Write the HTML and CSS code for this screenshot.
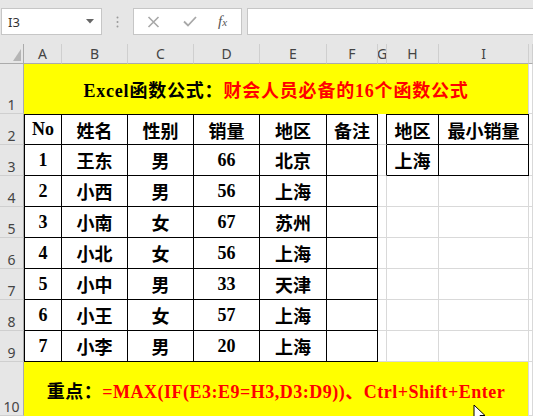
FILE: index.html
```html
<!DOCTYPE html>
<html lang="zh">
<head>
<meta charset="utf-8">
<title>Excel</title>
<link rel="stylesheet" href="styles.css">
</head>
<body>
<div class="fbar">
  <div class="namebox">
    <span class="nbtext">I3</span>
    <svg class="nbarrow" width="8" height="5" viewBox="0 0 8 5"><path d="M0 0 L8 0 L4 4.5 Z" fill="#666"/></svg>
  </div>
  <div class="dots">
    <svg width="3" height="12" viewBox="0 0 3 12"><circle cx="1.5" cy="1.5" r="1" fill="#9a9a9a"/><circle cx="1.5" cy="6" r="1" fill="#9a9a9a"/><circle cx="1.5" cy="10.5" r="1" fill="#9a9a9a"/></svg>
  </div>
  <div class="fbtns">
    <svg class="ico" width="13" height="12" viewBox="0 0 13 12"><path d="M1.5 1 L11.5 11 M11.5 1 L1.5 11" stroke="#a8a8a8" stroke-width="1.6" fill="none"/></svg>
    <svg class="ico" width="14" height="11" viewBox="0 0 14 11"><path d="M1 5.5 L5 9.5 L13 1" stroke="#a8a8a8" stroke-width="1.8" fill="none"/></svg>
    <span class="fx">f<span class="fxx">x</span></span>
  </div>
  <div class="finput"></div>
</div>

<div class="sheet">
  <!-- column header -->
  <div class="ch corner"><svg width="8" height="12" viewBox="0 0 8 12"><path d="M8 0 L8 12 L0 12 Z" fill="#b5b5b5"/></svg></div>
  <div class="ch">A</div><div class="ch">B</div><div class="ch">C</div><div class="ch">D</div><div class="ch">E</div><div class="ch">F</div><div class="ch">G</div><div class="ch">H</div><div class="ch">I</div><div class="ch"></div>

  <!-- row 1 -->
  <div class="rh">1</div>
  <div class="c y title"><span class="blk">Excel函数公式：</span><span class="red">财会人员必备的16个函数公式</span></div>
  <div class="c"></div>

  <!-- row 2 -->
  <div class="rh">2</div>
  <div class="c t tt tl">No</div><div class="c t tt">姓名</div><div class="c t tt">性别</div><div class="c t tt">销量</div><div class="c t tt">地区</div><div class="c t tt">备注</div>
  <div class="c gb"></div><div class="c t tt">地区</div><div class="c t tt">最小销量</div><div class="c"></div>

  <!-- row 3 -->
  <div class="rh">3</div>
  <div class="c t tl">1</div><div class="c t">王东</div><div class="c t">男</div><div class="c t">66</div><div class="c t">北京</div><div class="c t"></div>
  <div class="c gb"></div><div class="c t">上海</div><div class="c t"></div><div class="c"></div>

  <!-- row 4 -->
  <div class="rh">4</div>
  <div class="c t tl">2</div><div class="c t">小西</div><div class="c t">男</div><div class="c t">56</div><div class="c t">上海</div><div class="c t"></div>
  <div class="c"></div><div class="c"></div><div class="c"></div><div class="c"></div>

  <!-- row 5 -->
  <div class="rh">5</div>
  <div class="c t tl">3</div><div class="c t">小南</div><div class="c t">女</div><div class="c t">67</div><div class="c t">苏州</div><div class="c t"></div>
  <div class="c"></div><div class="c"></div><div class="c"></div><div class="c"></div>

  <!-- row 6 -->
  <div class="rh">6</div>
  <div class="c t tl">4</div><div class="c t">小北</div><div class="c t">女</div><div class="c t">56</div><div class="c t">上海</div><div class="c t"></div>
  <div class="c"></div><div class="c"></div><div class="c"></div><div class="c"></div>

  <!-- row 7 -->
  <div class="rh">7</div>
  <div class="c t tl">5</div><div class="c t">小中</div><div class="c t">男</div><div class="c t">33</div><div class="c t">天津</div><div class="c t"></div>
  <div class="c"></div><div class="c"></div><div class="c"></div><div class="c"></div>

  <!-- row 8 -->
  <div class="rh">8</div>
  <div class="c t tl">6</div><div class="c t">小王</div><div class="c t">女</div><div class="c t">57</div><div class="c t">上海</div><div class="c t"></div>
  <div class="c"></div><div class="c"></div><div class="c"></div><div class="c"></div>

  <!-- row 9 -->
  <div class="rh">9</div>
  <div class="c t tl">7</div><div class="c t">小李</div><div class="c t">男</div><div class="c t">20</div><div class="c t">上海</div><div class="c t"></div>
  <div class="c"></div><div class="c"></div><div class="c"></div><div class="c"></div>

  <!-- row 10 -->
  <div class="rh">10</div>
  <div class="c y note"><span class="blk">重点：</span><span class="red">=MAX(IF(E3:E9=H3,D3:D9))、Ctrl+Shift+Enter</span></div>
  <div class="c"></div>
</div>

<svg class="cursor" width="14" height="20" viewBox="0 0 14 20"><path d="M1 1 L1 16 L4.5 12.5 L7 18.5 L9.5 17.5 L7 11.5 L12 11.5 Z" fill="#fff" stroke="#000" stroke-width="1"/></svg>
</body>
</html>
```

FILE: styles.css
```css
html, body {
  margin: 0;
  padding: 0;
}
body {
  width: 533px;
  height: 416px;
  overflow: hidden;
  position: relative;
  background: #ffffff;
  font-family: "Liberation Serif", "Noto Sans CJK SC", serif;
}

/* formula bar */
.fbar {
  height: 44px;
  box-sizing: border-box;
  padding-top: 8px;
  background: #e6e6e6;
  display: flex;
  align-items: flex-start;
}
.namebox {
  margin-left: 1px;
  width: 101px;
  height: 27px;
  box-sizing: border-box;
  background: #fff;
  border: 1px solid #c6c6c6;
  display: flex;
  align-items: center;
  justify-content: space-between;
  padding: 0 6px 0 6px;
  font-family: "Noto Sans", "Liberation Sans", sans-serif;
  font-size: 13px;
  color: #333;
}
.nbarrow {
  margin-right: 1px;
}
.dots {
  width: 31px;
  height: 27px;
  display: flex;
  align-items: center;
  justify-content: center;
}
.fbtns {
  width: 109px;
  height: 27px;
  box-sizing: border-box;
  background: #fff;
  border: 1px solid #c6c6c6;
  display: flex;
  align-items: center;
  padding-left: 13px;
  gap: 23px;
}
.fx {
  font-family: "Liberation Serif", serif;
  font-style: italic;
  font-size: 15px;
  color: #555;
  margin-left: -2px;
}
.fxx {
  font-size: 11px;
}
.finput {
  flex: 1;
  margin-left: 5px;
  margin-right: -2px;
  height: 27px;
  box-sizing: border-box;
  background: #fff;
  border: 1px solid #c6c6c6;
}

/* sheet grid */
.sheet {
  display: grid;
  grid-template-columns: 24px 38px 66px 66px 66px 67px 51px 9px 52px 90px 1fr;
  grid-template-rows: 20px 50px repeat(8, 31px) 54px;
}
.ch {
  background: #e6e6e6;
  border-right: 1px solid #cfcfcf;
  border-bottom: 1px solid #ababab;
  box-sizing: border-box;
  font-family: "Noto Sans", "Liberation Sans", sans-serif;
  font-size: 14px;
  color: #444;
  display: flex;
  justify-content: center;
  align-items: flex-end;
  line-height: 18px;
  overflow: hidden;
  white-space: nowrap;
}
.corner {
  justify-content: flex-end;
  padding-right: 2px;
  padding-bottom: 2px;
  border-right-color: #ababab;
}
.rh {
  background: #e6e6e6;
  border-right: 1px solid #ababab;
  border-bottom: 1px solid #cfcfcf;
  box-sizing: border-box;
  font-family: "Noto Sans", "Liberation Sans", sans-serif;
  font-size: 14px;
  color: #444;
  display: flex;
  justify-content: center;
  align-items: flex-end;
  line-height: 16px;
  padding-bottom: 0;
}
.c {
  box-sizing: border-box;
  border-right: 1px solid #d9d9d9;
  border-bottom: 1px solid #d9d9d9;
  background: #fff;
  display: flex;
  align-items: center;
  justify-content: center;
  font-size: 18px;
  font-weight: bold;
  color: #000;
  white-space: nowrap;
}
.t {
  border-right-color: #000;
  border-bottom-color: #000;
}
.tt {
  border-top: 1px solid #000;
}
.tl {
  border-left: 1px solid #000;
}
.gb {
  border-right-color: #000;
}
.y {
  grid-column: 2 / 11;
  background: #ffff00;
  border-bottom: none;
}
.title {
  font-size: 18px;
  letter-spacing: 0.8px;
}
.note {
  font-size: 18px;
  letter-spacing: 0.5px;
  padding-top: 1px;
}
.blk {
  color: #000;
}
.red {
  color: #ff0000;
}
.cursor {
  position: absolute;
  left: 473px;
  top: 404px;
}
```
